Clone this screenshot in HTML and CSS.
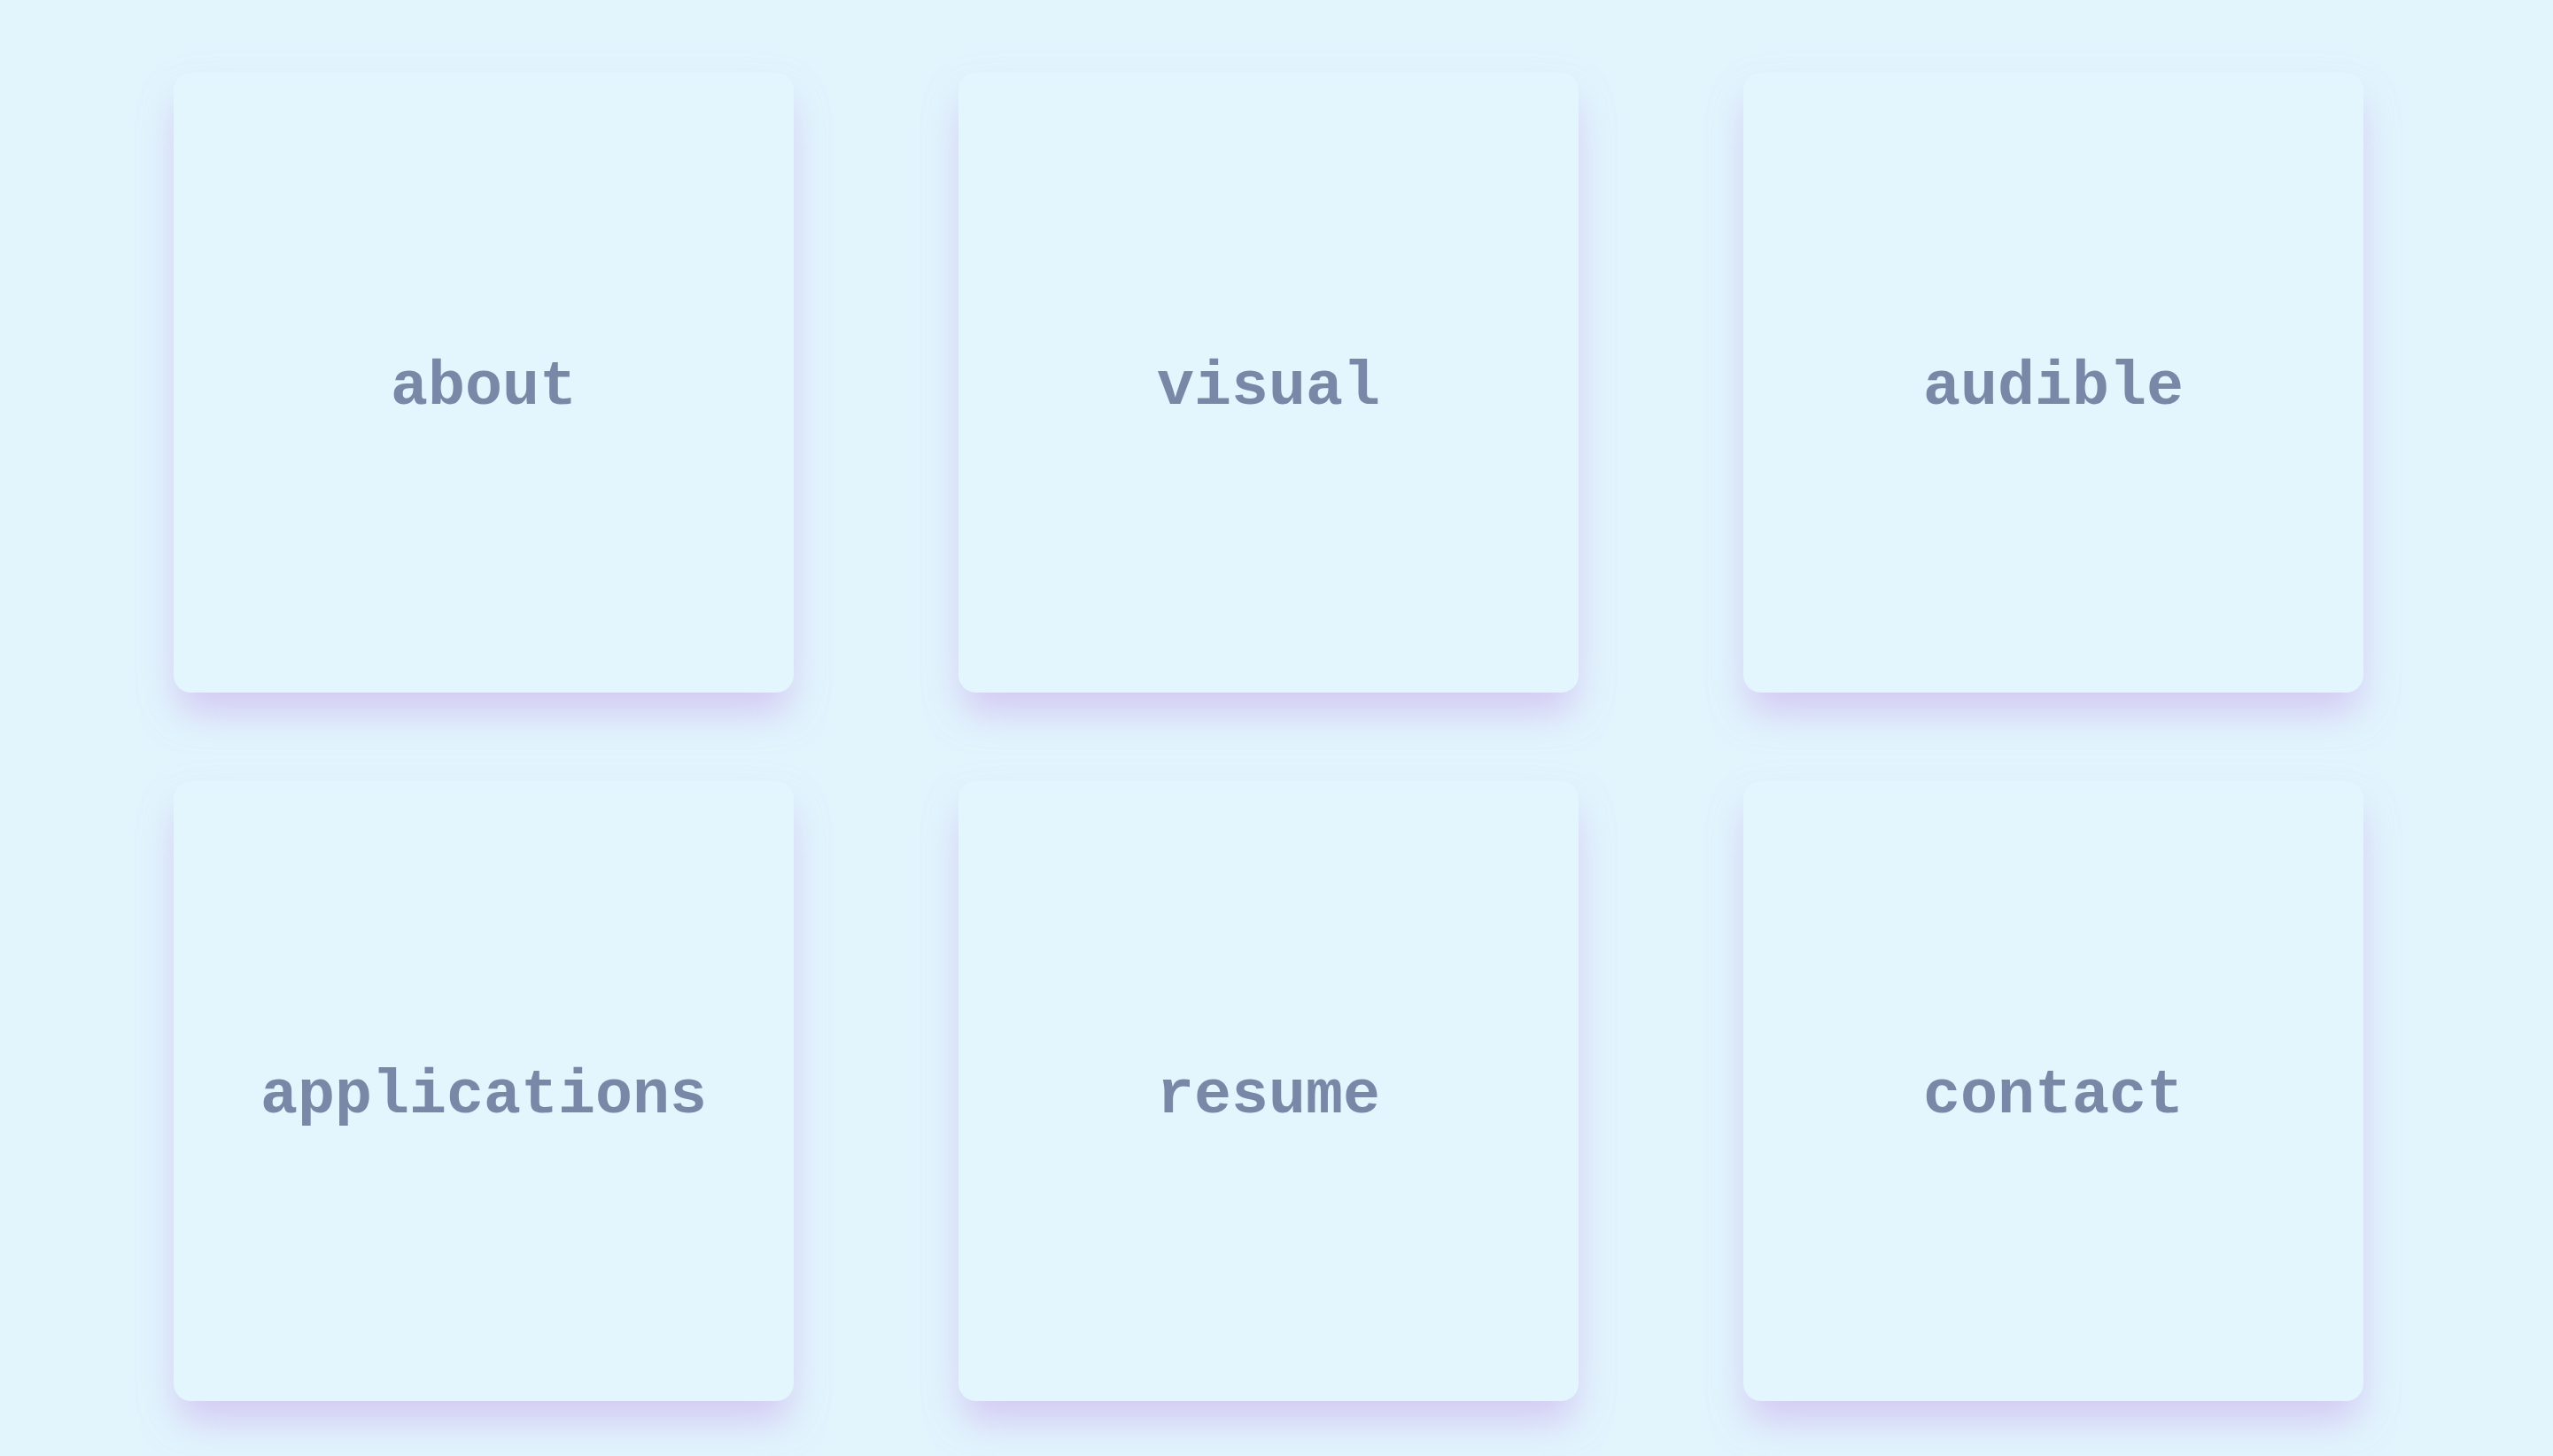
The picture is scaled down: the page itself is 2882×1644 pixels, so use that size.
FILE: index.html
```html
<!DOCTYPE html>
<html lang="en">
<head>
<meta charset="utf-8">
<title>Home</title>
<link rel="stylesheet" href="styles.css">
</head>
<body>
<main class="grid">
  <a class="card" href="#about"><span class="label">about</span></a>
  <a class="card" href="#visual"><span class="label">visual</span></a>
  <a class="card" href="#audible"><span class="label">audible</span></a>
  <a class="card" href="#applications"><span class="label">applications</span></a>
  <a class="card" href="#resume"><span class="label">resume</span></a>
  <a class="card" href="#contact"><span class="label">contact</span></a>
</main>
</body>
</html>
```
FILE: styles.css
```css
html, body {
  margin: 0;
  padding: 0;
  background: #e2f5fd;
  height: 100%;
  overflow: hidden;
}

.grid {
  display: grid;
  grid-template-columns: repeat(3, 700px);
  grid-auto-rows: 700px;
  column-gap: 186px;
  row-gap: 100px;
  padding: 82px 214px 0 196px;
}

.card {
  display: flex;
  align-items: center;
  justify-content: center;
  background: #e3f6fd;
  border-radius: 20px;
  text-decoration: none;
  box-shadow: 0 28px 40px -6px rgba(208, 180, 238, 0.6),
              0 20px 50px -10px rgba(200, 205, 245, 0.35);
}

.label {
  font-family: "Liberation Mono", "Courier New", monospace;
  font-weight: bold;
  font-size: 70px;
  color: #7a88a8;
  padding-top: 10px;
}
```
